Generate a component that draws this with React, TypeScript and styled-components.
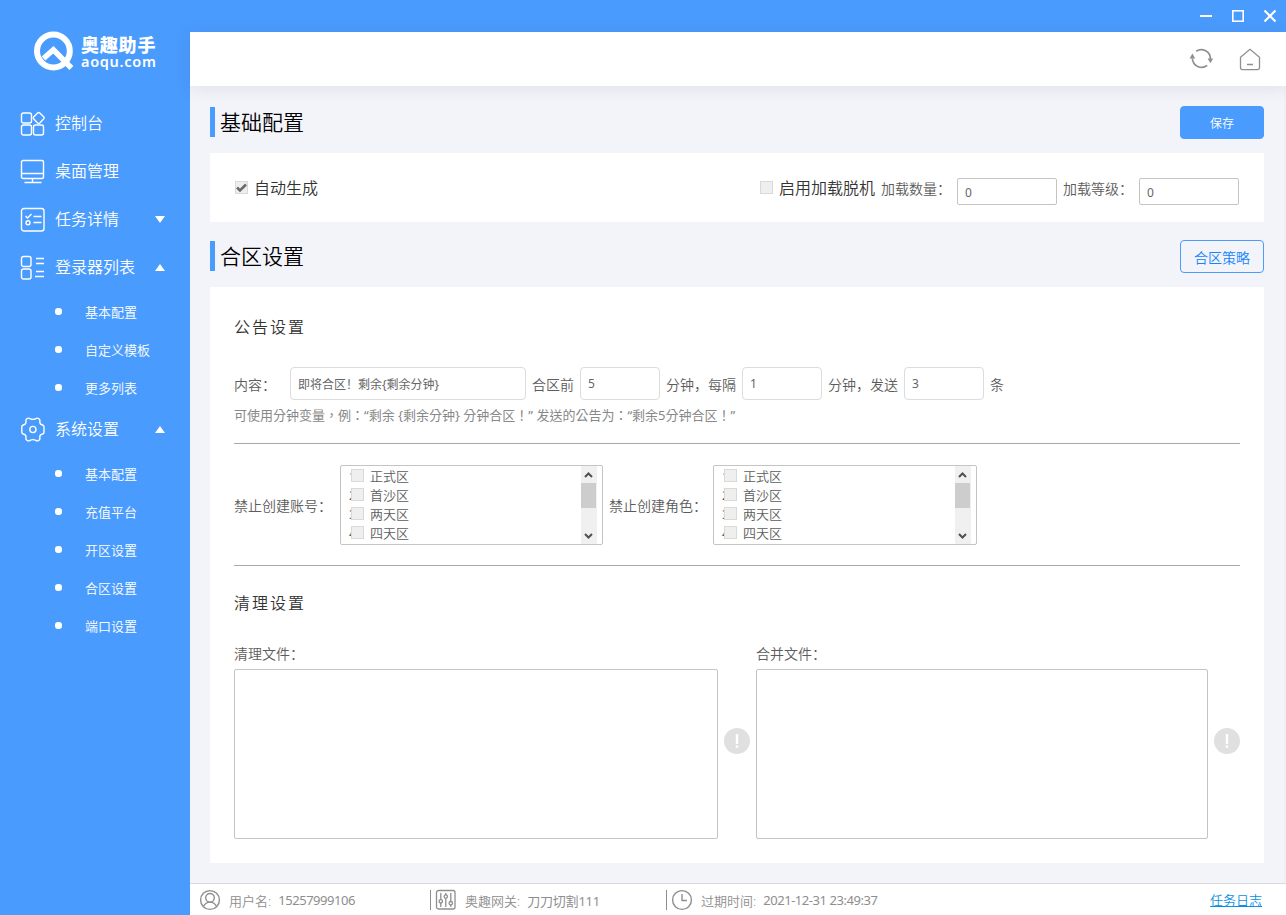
import React, { useState } from "react";
import styled, { createGlobalStyle } from "styled-components";

const GlobalStyle = createGlobalStyle`
  * {
    box-sizing: border-box;
  }

  body {
    margin: 0;
    overflow: hidden;
    font-family: "Noto Sans", "Noto Sans CJK SC", sans-serif;
    font-weight: 350;
    color: #333;
  }

  input, textarea, button {
    font-family: inherit;
    font-weight: inherit;
  }
`;

const Window = styled.div`
  display: flex;
  width: 1286px;
  height: 915px;
  background: #4a9bfe;
`;

const Sidebar = styled.aside`
  width: 190px;
  flex: none;
  color: #fff;
`;

const Logo = styled.div`
  display: flex;
  height: 99px;
  padding: 31px 0 0 33px;
  gap: 7px;
`;

const LogoText = styled.div`
  display: flex;
  flex-direction: column;
  padding-top: 3px;
  white-space: nowrap;
`;

const LogoName = styled.span`
  height: 20px;
  line-height: 20px;
  font-family: "Noto Sans CJK SC", sans-serif;
  font-size: 18px;
  font-weight: 900;
  letter-spacing: 0.8px;
`;

const LogoDomain = styled.span`
  height: 14px;
  line-height: 14px;
  font-family: "Noto Sans", sans-serif;
  font-size: 14.5px;
  font-weight: 600;
  letter-spacing: 0.7px;
`;

const NavItem = styled.div`
  display: flex;
  align-items: center;
  height: 48px;
  padding-left: 20px;
  font-size: 16px;
  cursor: pointer;

  svg {
    flex: none;
    margin-top: 2px;
  }
`;

const NavLabel = styled.span`
  flex: 1;
  margin: 0 0 2px 9px;
`;

const Arrow = styled.i<{ $open?: boolean }>`
  width: 0;
  height: 0;
  margin-right: 25px;
  border: 5px solid transparent;
  border-top: ${(props) => (props.$open ? "0" : "7px solid #fff")};
  border-bottom: ${(props) => (props.$open ? "7px solid #fff" : "0")};
`;

const SubItem = styled.div`
  display: flex;
  align-items: center;
  height: 38px;
  padding: 3px 0 0 55px;
  font-size: 13px;
  cursor: pointer;

  &::before {
    content: "";
    width: 7px;
    height: 7px;
    margin: 0 23px 0 0;
    border-radius: 3px;
    background: #fff;
  }
`;

const Body = styled.div`
  display: flex;
  flex: 1;
  flex-direction: column;
  min-width: 0;
`;

const TitleBar = styled.div`
  display: flex;
  align-items: center;
  justify-content: flex-end;
  height: 32px;
  gap: 18px;
  padding-right: 9px;
`;

const Toolbar = styled.header`
  display: flex;
  position: relative;
  align-items: center;
  justify-content: flex-end;
  height: 54px;
  gap: 25px;
  padding: 1px 24px 0 0;
  background: #fff;
  box-shadow: 0 2px 16px rgba(60, 60, 90, 0.11);
`;

const Main = styled.main`
  flex: 1;
  padding: 20px 20px 0;
  border-right: 2px solid #f0f0f2;
  background: #f3f4fa;
`;

const SectionHead = styled.div`
  display: flex;
  align-items: center;
  justify-content: space-between;
  height: 33px;
  margin-bottom: 14px;
`;

const SectionTitle = styled.h2`
  display: flex;
  align-items: center;
  height: 30px;
  margin: 0 0 1px;
  padding: 0 0 2px 5px;
  border-left: 5px solid #4a9bfe;
  font-size: 21px;
  font-weight: 350;
  color: #000;
`;

const Button = styled.button<{ $outline?: boolean }>`
  width: 84px;
  height: 33px;
  padding: 0;
  border: 1px solid #4a9bfe;
  border-radius: 4px;
  background: ${(props) => (props.$outline ? "transparent" : "#4a9bfe")};
  color: ${(props) => (props.$outline ? "#1684fc" : "#fff")};
  font-size: ${(props) => (props.$outline ? "14px" : "12px")};
  cursor: pointer;
`;

const BasicCard = styled.div`
  display: flex;
  align-items: center;
  justify-content: space-between;
  height: 69px;
  margin-bottom: 18px;
  padding: 0 25px;
  background: #fff;
`;

const MergeCard = styled.div`
  height: 576px;
  padding: 28px 24px 0;
  background: #fff;
`;

const Group = styled.div`
  display: flex;
  align-items: center;
`;

const Box = styled.span`
  display: flex;
  flex: none;
  width: 13px;
  height: 13px;
  border: 1px solid #d9d9d5;
  background: #efefef;
`;

const CheckLabel = styled.label`
  display: flex;
  align-items: center;
  gap: 6px;
  margin-top: -2px;
  font-size: 16px;

  ${Box} {
    margin-top: 1px;
  }
`;

const FieldLabel = styled.span<{ $width?: number; $indent?: number }>`
  flex: none;
  width: ${(props) => (props.$width ? `${props.$width}px` : "auto")};
  padding-left: ${(props) => props.$indent || 0}px;
  font-size: 14px;
  color: #5c5c5c;
  white-space: nowrap;
`;

const Input = styled.input<{ $width: number; $small?: boolean }>`
  width: ${(props) => props.$width}px;
  height: ${(props) => (props.$small ? 27 : 33)}px;
  margin-top: ${(props) => (props.$small ? 8 : 0)}px;
  padding: ${(props) => (props.$small ? 2 : 0)}px 7px 0;
  border: 1px solid ${(props) => (props.$small ? "#c4c4c4" : "#dcdcdc")};
  border-radius: ${(props) => (props.$small ? 2 : 4)}px;
  outline: none;
  background: #fff;
  color: #666;
  font-size: 12px;
  font-weight: 400;
`;

const SubTitle = styled.h3`
  height: 24px;
  margin: 0;
  line-height: 24px;
  font-size: 16px;
  font-weight: 350;
  letter-spacing: 2px;
`;

const NoticeRow = styled.div`
  display: flex;
  align-items: center;
  height: 33px;
  margin-top: 28px;
`;

const Hint = styled.p`
  height: 20px;
  margin: 5px 0 18px;
  line-height: 20px;
  font-family: "Noto Sans", "Noto Sans CJK TC", sans-serif;
  font-size: 13px;
  font-weight: 400;
  color: #888;
`;

const Rule = styled.hr`
  height: 1px;
  margin: 0;
  border: 0;
  background: #a8a8ab;
`;

const ForbidRow = styled.div`
  display: flex;
  align-items: center;
  margin: 21px 0 20px;
`;

const ZoneList = styled.div<{ $width: number }>`
  display: flex;
  justify-content: space-between;
  width: ${(props) => props.$width}px;
  height: 80px;
  padding-right: 5px;
  border: 1px solid #c4c4c4;
  border-radius: 2px;
  overflow: hidden;
`;

const Zones = styled.ol`
  margin: 0;
  padding: 0 0 0 8px;
  list-style: none;
`;

const Zone = styled.li`
  display: flex;
  align-items: center;
  height: 19px;
  font-size: 13px;
  color: #5c5c5c;

  ${Box} {
    position: relative;
    margin: 0 6px 0 -6px;
  }
`;

const ZoneIndex = styled.span`
  width: 8px;
  font-weight: 400;
`;

const Scrollbar = styled.div`
  display: flex;
  flex-direction: column;
  align-items: center;
  width: 16px;
  background: #f0f0f0;
`;

const Thumb = styled.div`
  width: 15px;
  height: 25px;
  margin-bottom: auto;
  margin-right: 1px;
  background: #cdcdcd;
`;

const CleanTitle = styled(SubTitle)`
  margin-top: 25px;
`;

const FileRow = styled.div`
  display: flex;
  margin-top: 29px;
`;

const FileField = styled.label`
  display: flex;
  flex-direction: column;
  gap: 5px;
  height: 195px;

  ${FieldLabel} {
    height: 20px;
    line-height: 20px;
  }
`;

const TextArea = styled.textarea<{ $width: number }>`
  width: ${(props) => props.$width}px;
  height: 170px;
  border: 1px solid #c4c4c4;
  border-radius: 2px;
  outline: none;
  resize: none;
`;

const Tip = styled.span`
  display: flex;
  width: 26px;
  height: 26px;
  margin: 84px 6px 0;

  &:last-child {
    margin-right: 0;
  }
`;

const StatusBar = styled.footer`
  display: flex;
  align-items: center;
  height: 32px;
  padding: 1px 24px 0 9px;
  border-top: 1px solid #d9d9dc;
  background: #fff;
  color: #8e8e8e;
  font-size: 13px;
`;

const Status = styled.div<{ $width: number }>`
  display: flex;
  align-items: center;
  width: ${(props) => props.$width}px;
  height: 20px;
  white-space: nowrap;

  & + & {
    padding-left: 4px;
    border-left: 1px solid #8e8e8e;
  }

  svg {
    flex: none;
    margin-right: 8px;
  }
`;

const Digits = styled.span`
  margin-left: 7px;
  font-weight: 400;
  letter-spacing: -0.45px;
`;

const Gateway = styled.span`
  margin-left: 7px;
  font-weight: 400;
  letter-spacing: -0.2px;
`;

const LogLink = styled.a`
  margin: 0 0 1px auto;
  color: #0a8fe6;
  text-decoration: underline;
`;

const LogoMark = () => (
  <svg width="41" height="40" viewBox="0 0 41 40" fill="none" stroke="#fff">
    <circle cx="20.4" cy="20" r="16.4" strokeWidth="6" />
    <path d="M10.5 27.5 20.4 18.8 38.4 37" strokeWidth="5.5" />
  </svg>
);

const navIcons: Record<string, React.ReactNode> = {
  console: (
    <>
      <rect x="1.5" y="2" width="10" height="10" rx="2" />
      <rect x="1.5" y="14" width="10" height="10" rx="2" />
      <rect x="13.5" y="14" width="10" height="10" rx="2" />
      <path d="M17.6 1.9q1.1-1 2.2 0l3.8 3.9q1 1 0 2.2l-3.8 3.9q-1.1 1-2.2 0l-3.8-3.9q-1-1.2 0-2.2z" />
    </>
  ),
  desktop: (
    <>
      <rect x="1.5" y="1.5" width="22" height="18" rx="1.5" />
      <path d="M1.5 14.5h22M12.5 19.5v3.5M4.5 23.5h17" />
    </>
  ),
  task: (
    <>
      <rect x="1.5" y="1.5" width="22.5" height="22.5" rx="2.5" />
      <path d="m5.5 9 2 2 4-4M13.5 9.5h8M13.5 15.5h8" />
      <circle cx="8" cy="15.8" r="2" />
    </>
  ),
  list: (
    <>
      <rect x="1.5" y="1.5" width="9.5" height="10" rx="2" />
      <rect x="1.5" y="14" width="9.5" height="10" rx="2" />
      <path d="M16 3.5h8M16 8.5h8M16 16.5h8M15 21.5h9" />
    </>
  ),
  setting: (
    <>
      <path d="M6.8 1.8q1.6-1.3 3.2-.2 2.8 1.6 5.8 0 1.6-1.1 3.2.2 1.3.9.8 2.8-.2 2.8 2.8 3.4 1.4.5 1.4 2v5q0 1.5-1.4 2-3 .6-2.8 3.4.5 1.9-.8 2.8-1.6 1.3-3.2.2-3-1.6-5.8 0-1.6 1.1-3.2-.2-1.3-.9-.8-2.8.2-2.8-2.8-3.4-1.4-.5-1.4-2v-5q0-1.5 1.4-2 3-.6 2.8-3.4-.5-1.9.8-2.8z" />
      <circle cx="12.9" cy="12.5" r="3.1" />
    </>
  ),
};

const NavIcon = ({ name }: { name: string }) => (
  <svg width="26" height="26" viewBox="0 0 26 26" fill="none" stroke="#fff" strokeWidth="1.4">
    {navIcons[name]}
  </svg>
);

const TipIcon = () => (
  <svg width="26" height="26" viewBox="0 0 26 26">
    <circle cx="13" cy="13" r="13" fill="#e0e0e0" />
    <path d="M13 6v10M13 17.5v2.3" stroke="#fff" strokeWidth="2.4" />
  </svg>
);

type Menu = {
  icon: string;
  label: string;
  children?: string[];
};

const menus: Menu[] = [
  { icon: "console", label: "控制台" },
  { icon: "desktop", label: "桌面管理" },
  { icon: "task", label: "任务详情", children: [] },
  { icon: "list", label: "登录器列表", children: ["基本配置", "自定义模板", "更多列表"] },
  { icon: "setting", label: "系统设置", children: ["基本配置", "充值平台", "开区设置", "合区设置", "端口设置"] },
];

const zones = ["正式区", "首沙区", "两天区", "四天区"];

const ZoneSelect = ({ width }: { width: number }) => (
  <ZoneList $width={width}>
    <Zones>
      {zones.map((zone, i) => (
        <Zone key={zone}>
          <ZoneIndex>{i + 1}</ZoneIndex>
          <Box />
          {zone}
        </Zone>
      ))}
    </Zones>
    <Scrollbar>
      <svg width="16" height="17" viewBox="0 0 16 17" fill="none" stroke="#505050" strokeWidth="2">
        <path d="m4 11 3.5-3.5L11 11" />
      </svg>
      <Thumb />
      <svg width="16" height="17" viewBox="0 0 16 17" fill="none" stroke="#505050" strokeWidth="2">
        <path d="M4 7l3.5 3.5L11 7" />
      </svg>
    </Scrollbar>
  </ZoneList>
);

const App: React.FC = () => {
  const [opened, setOpened] = useState<string[]>(["登录器列表", "系统设置"]);

  const toggle = (label: string) => {
    setOpened(opened.includes(label) ? opened.filter((o) => o !== label) : [...opened, label]);
  };

  return (
    <Window>
      <GlobalStyle />
      <Sidebar>
        <Logo>
          <LogoMark />
          <LogoText>
            <LogoName>奥趣助手</LogoName>
            <LogoDomain>aoqu.com</LogoDomain>
          </LogoText>
        </Logo>
        {menus.map((menu) => (
          <React.Fragment key={menu.label}>
            <NavItem onClick={() => toggle(menu.label)}>
              <NavIcon name={menu.icon} />
              <NavLabel>{menu.label}</NavLabel>
              {menu.children && <Arrow $open={opened.includes(menu.label)} />}
            </NavItem>
            {opened.includes(menu.label) &&
              menu.children?.map((child) => <SubItem key={child}>{child}</SubItem>)}
          </React.Fragment>
        ))}
      </Sidebar>

      <Body>
        <TitleBar>
          <svg width="14" height="14" viewBox="0 0 14 14" stroke="#fff" strokeWidth="2">
            <path d="M1 7h12" />
          </svg>
          <svg width="14" height="14" viewBox="0 0 14 14" fill="none" stroke="#fff" strokeWidth="1.6">
            <rect x="1.8" y="1.8" width="10.4" height="10.4" />
          </svg>
          <svg width="14" height="14" viewBox="0 0 14 14" stroke="#fff" strokeWidth="2.2">
            <path d="m1.5 1.5 11 11M12.5 1.5l-11 11" />
          </svg>
        </TitleBar>
        <Toolbar>
          <svg width="24" height="24" viewBox="0 0 24 24" fill="none" stroke="#8f8f8f" strokeWidth="1.7">
            <path d="M7.2 3.2A9.2 9.2 0 0 1 21.4 11M18.2 17.4A9.2 9.2 0 0 1 3.4 10.5" />
            <path d="M18.6 10.5h5.6L21.4 15.3zM.6 10.5h5.6L3.4 5.5z" fill="#8f8f8f" stroke="none" />
          </svg>
          <svg width="24" height="24" viewBox="0 0 24 24" fill="none" stroke="#8f8f8f" strokeWidth="1.3">
            <path d="M2.5 9.2 12 1.3l9.5 7.9v10.6q0 1.8-1.8 1.8H4.3q-1.8 0-1.8-1.8zM9 16.5h6" />
          </svg>
        </Toolbar>

        <Main>
          <SectionHead>
            <SectionTitle>基础配置</SectionTitle>
            <Button>保存</Button>
          </SectionHead>
          <BasicCard>
            <CheckLabel>
              <Box>
                <svg width="11" height="11" viewBox="0 0 11 11" fill="none" stroke="#6b6b6b" strokeWidth="2.6">
                  <path d="m1 5.5 3 3 6-6" />
                </svg>
              </Box>
              自动生成
            </CheckLabel>
            <Group>
              <CheckLabel>
                <Box />
                启用加载脱机
              </CheckLabel>
              <FieldLabel $width={82} $indent={6}>加载数量：</FieldLabel>
              <Input $small $width={100} defaultValue="0" />
              <FieldLabel $width={82} $indent={6}>加载等级：</FieldLabel>
              <Input $small $width={100} defaultValue="0" />
            </Group>
          </BasicCard>

          <SectionHead>
            <SectionTitle>合区设置</SectionTitle>
            <Button $outline>合区策略</Button>
          </SectionHead>
          <MergeCard>
            <SubTitle>公告设置</SubTitle>
            <NoticeRow>
              <FieldLabel $width={56}>内容：</FieldLabel>
              <Input $width={236} defaultValue="即将合区！剩余{剩余分钟}" />
              <FieldLabel $width={54} $indent={6}>合区前</FieldLabel>
              <Input $width={80} defaultValue="5" />
              <FieldLabel $width={82} $indent={6}>分钟，每隔</FieldLabel>
              <Input $width={80} defaultValue="1" />
              <FieldLabel $width={82} $indent={6}>分钟，发送</FieldLabel>
              <Input $width={80} defaultValue="3" />
              <FieldLabel $indent={6}>条</FieldLabel>
            </NoticeRow>
            <Hint>可使用分钟变量，例：“剩余 {"{剩余分钟}"} 分钟合区！” 发送的公告为：“剩余5分钟合区！”</Hint>
            <Rule />
            <ForbidRow>
              <FieldLabel $width={106}>禁止创建账号：</FieldLabel>
              <ZoneSelect width={263} />
              <FieldLabel $width={110} $indent={6}>禁止创建角色：</FieldLabel>
              <ZoneSelect width={264} />
            </ForbidRow>
            <Rule />
            <CleanTitle>清理设置</CleanTitle>
            <FileRow>
              <FileField>
                <FieldLabel>清理文件：</FieldLabel>
                <TextArea $width={484} />
              </FileField>
              <Tip>
                <TipIcon />
              </Tip>
              <FileField>
                <FieldLabel>合并文件：</FieldLabel>
                <TextArea $width={452} />
              </FileField>
              <Tip>
                <TipIcon />
              </Tip>
            </FileRow>
          </MergeCard>
        </Main>

        <StatusBar>
          <Status $width={231}>
            <svg width="22" height="22" viewBox="0 0 22 22" fill="none" stroke="#8e8e8e" strokeWidth="1.4">
              <circle cx="11" cy="11" r="9.4" />
              <circle cx="11" cy="8.8" r="4.3" />
              <path d="M4.5 17.5q2-4.4 6.5-4.4t6.5 4.4" />
            </svg>
            用户名:<Digits>15257999106</Digits>
          </Status>
          <Status $width={236}>
            <svg width="22" height="22" viewBox="0 0 22 22" fill="none" stroke="#8e8e8e" strokeWidth="1.3">
              <rect x="1.5" y="1.5" width="18.5" height="18.5" rx="2" />
              <path d="M5.8 4v6.5M5.8 14v4M10.8 4v2M10.8 9.5V18M15.8 4v8.5M15.8 16v2" />
              <circle cx="5.8" cy="12.3" r="1.7" />
              <circle cx="10.8" cy="7.6" r="1.7" />
              <circle cx="15.8" cy="14.2" r="1.7" />
            </svg>
            奥趣网关:<Gateway>刀刀切割111</Gateway>
          </Status>
          <Status $width={300}>
            <svg width="22" height="22" viewBox="0 0 22 22" fill="none" stroke="#8e8e8e" strokeWidth="1.4">
              <circle cx="11" cy="11" r="9.4" />
              <path d="M11 5v6.5h5" />
            </svg>
            过期时间:<Digits>2021-12-31 23:49:37</Digits>
          </Status>
          <LogLink>任务日志</LogLink>
        </StatusBar>
      </Body>
    </Window>
  );
};

export default App;
